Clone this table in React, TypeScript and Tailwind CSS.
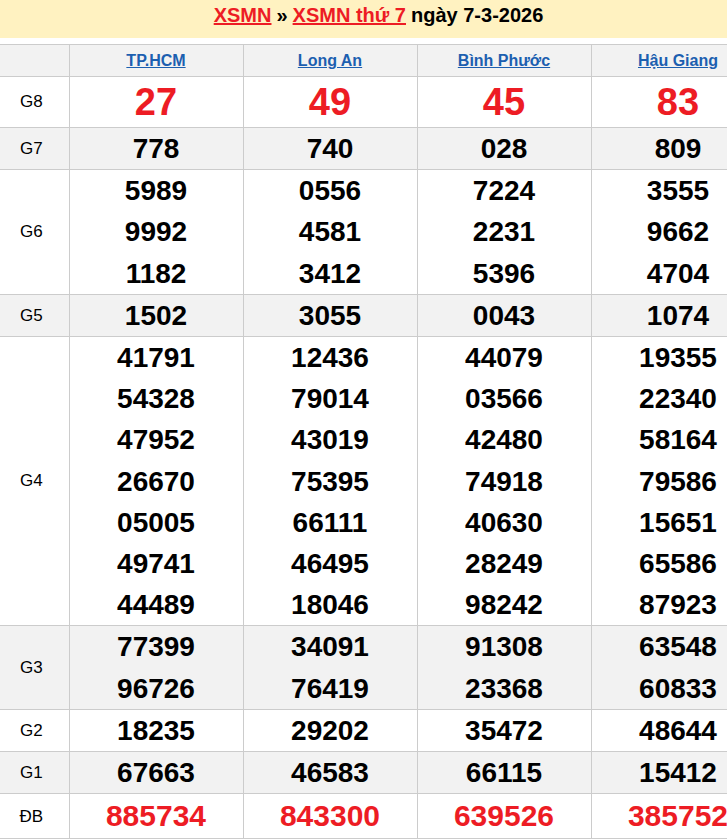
import React from "react";

const provinces = ["TP.HCM", "Long An", "Bình Phước", "Hậu Giang"];

type Row = { label: string; values: string[][]; kind?: "g8" | "db"; striped?: boolean };

const rows: Row[] = [
  { label: "G8", values: [["27"], ["49"], ["45"], ["83"]], kind: "g8" },
  { label: "G7", values: [["778"], ["740"], ["028"], ["809"]], striped: true },
  {
    label: "G6",
    values: [
      ["5989", "9992", "1182"],
      ["0556", "4581", "3412"],
      ["7224", "2231", "5396"],
      ["3555", "9662", "4704"],
    ],
  },
  { label: "G5", values: [["1502"], ["3055"], ["0043"], ["1074"]], striped: true },
  {
    label: "G4",
    values: [
      ["41791", "54328", "47952", "26670", "05005", "49741", "44489"],
      ["12436", "79014", "43019", "75395", "66111", "46495", "18046"],
      ["44079", "03566", "42480", "74918", "40630", "28249", "98242"],
      ["19355", "22340", "58164", "79586", "15651", "65586", "87923"],
    ],
  },
  {
    label: "G3",
    values: [
      ["77399", "96726"],
      ["34091", "76419"],
      ["91308", "23368"],
      ["63548", "60833"],
    ],
    striped: true,
  },
  { label: "G2", values: [["18235"], ["29202"], ["35472"], ["48644"]] },
  { label: "G1", values: [["67663"], ["46583"], ["66115"], ["15412"]], striped: true },
  { label: "ĐB", values: [["885734"], ["843300"], ["639526"], ["385752"]], kind: "db" },
];

export default function App() {
  return (
    <div className="w-[727px] overflow-hidden bg-white" style={{ fontFamily: '"Liberation Sans", Arial, sans-serif' }}>
      <div className="w-[765px]">
        <div className="h-[38px] bg-[#fff2c1] flex items-start justify-center pt-[4px] pr-[8px] leading-[23px] text-[20px] font-bold text-black">
          <a className="text-[#ed1c24] underline">XSMN</a>
          <span className="mx-[5px]">»</span>
          <a className="text-[#ed1c24] underline">XSMN thứ 7</a>
          <span className="ml-[5px]">ngày 7-3-2026</span>
        </div>
        <table className="mt-[6px] w-[765px] border-collapse table-fixed">
          <colgroup>
            <col className="w-[69px]" />
            <col className="w-[174px]" />
            <col className="w-[174px]" />
            <col className="w-[174px]" />
            <col className="w-[174px]" />
          </colgroup>
          <thead>
            <tr className="bg-[#f2f2f2] h-[32px]">
              <th className="border border-[#cccccc] border-l-0"></th>
              {provinces.map((p) => (
                <th key={p} className="border border-[#cccccc] text-center text-[16px] font-bold">
                  <a className="text-[#1c5fb0] underline">{p}</a>
                </th>
              ))}
            </tr>
          </thead>
          <tbody>
            {rows.map((r) => (
              <tr key={r.label} className={r.striped ? "bg-[#f2f2f2]" : "bg-white"}>
                <td className="border border-[#cccccc] border-l-0 text-center text-[17px] text-black p-0 pr-[6px]">{r.label}</td>
                {r.values.map((vals, i) => (
                  <td key={i} className="border border-[#cccccc] text-center p-0">
                    {vals.map((v, j) => (
                      <div
                        key={j}
                        className={
                          r.kind === "g8"
                            ? "text-[38px] leading-[50px] font-bold text-[#ed1c24]"
                            : r.kind === "db"
                            ? "text-[30px] leading-[44px] font-bold text-[#ed1c24]"
                            : "text-[28px] leading-[41.2px] font-bold text-black"
                        }
                      >
                        {v}
                      </div>
                    ))}
                  </td>
                ))}
              </tr>
            ))}
          </tbody>
        </table>
      </div>
    </div>
  );
}
